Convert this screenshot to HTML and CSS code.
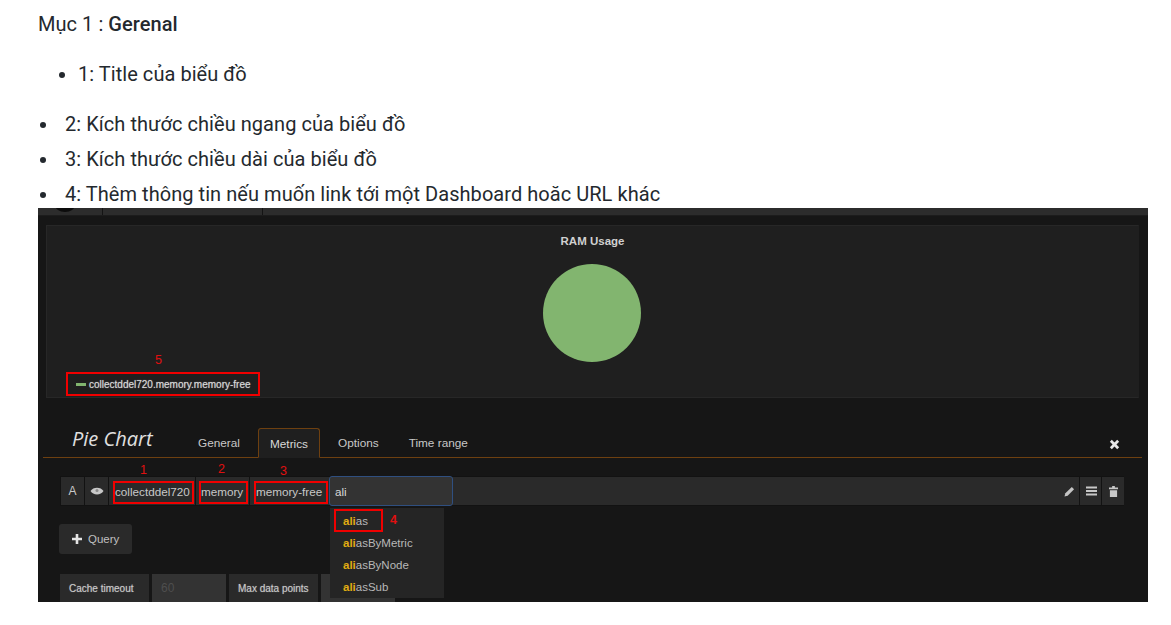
FILE: index.html
```html
<!DOCTYPE html>
<html lang="en">
<head>
    <meta charset="UTF-8">
    <meta name="viewport" content="width=device-width, initial-scale=1.0">
    <title>Mục 1 : Gerenal</title>
    <link rel="stylesheet" href="styles.css">
</head>
<body>
    <p class="intro">Mục 1 : <strong>Gerenal</strong></p>
    <ul class="list-nested">
        <li>1: Title của biểu đồ</li>
    </ul>
    <ul class="list-flat">
        <li>2: Kích thước chiều ngang của biểu đồ</li>
        <li>3: Kích thước chiều dài của biểu đồ</li>
        <li>4: Thêm thông tin nếu muốn link tới một Dashboard hoăc URL khác</li>
    </ul>

    <div class="shot">
        <div class="topbar">
            <span class="topbar-logo"></span>
            <span class="topbar-wide"></span>
        </div>

        <div class="panel">
            <div class="panel-title">RAM Usage</div>
            <div class="pie"></div>
            <div class="legend">
                <span class="note note-5">5</span>
                <span class="legend-box"><span class="legend-line"></span>collectddel720.memory.memory-free</span>
            </div>
        </div>

        <div class="editor-head">
            <div class="editor-title">Pie Chart</div>
            <div class="tab">General</div>
            <div class="tab tab-active">Metrics</div>
            <div class="tab">Options</div>
            <div class="tab">Time range</div>
            <svg class="close" viewBox="0 0 12 12"><path d="M2 2l8 8M10 2l-8 8" stroke="#e8e8e8" stroke-width="3"/></svg>
        </div>

        <div class="query-row">
            <div class="cell cell-a">A</div>
            <div class="cell cell-eye">
                <svg viewBox="0 0 14 10" width="14" height="10"><path d="M0.5 5C3 0.5 11 0.5 13.500 5C11 9.500 3 9.500 0.500 5Z" fill="#c8c8c8"/><circle cx="7" cy="4.500" r="1.500" fill="#8a8a8a"/></svg>
            </div>
            <div class="cell cell-seg seg-1"><span class="note note-1">1</span><span class="mark">collectddel720</span></div>
            <div class="cell cell-seg seg-2"><span class="note note-2">2</span><span class="mark">memory</span></div>
            <div class="cell cell-seg seg-3"><span class="note note-3">3</span><span class="mark">memory-free</span></div>
            <div class="query-input">
                ali
                <div class="dropdown">
                    <div class="drop-item drop-first"><b>ali</b>as<span class="note note-4">4</span></div>
                    <div class="drop-item"><b>ali</b>asByMetric</div>
                    <div class="drop-item"><b>ali</b>asByNode</div>
                    <div class="drop-item"><b>ali</b>asSub</div>
                </div>
            </div>
            <div class="query-fill">
                <svg viewBox="0 0 12 12" width="11" height="11"><path d="M0.500 11.500L1.500 8L8.500 1L11 3.500L4 10.500Z" fill="#c4c4c4"/></svg>
            </div>
            <div class="cell cell-icon icon-bars">
                <svg viewBox="0 0 11 10" width="11" height="10"><path d="M0 0.500h11v2H0zM0 4h11v2H0zM0 7.500h11v2H0z" fill="#c8c8c8"/></svg>
            </div>
            <div class="cell cell-icon">
                <svg viewBox="0 0 10 12" width="9" height="11"><path d="M3.500 0h3v1.500H10v2H0v-2h3.500zM1 4.500h8V12H1z" fill="#c8c8c8"/></svg>
            </div>
        </div>

        <div class="query-btn">
            <svg viewBox="0 0 10 10" width="10" height="10"><path d="M5 0v10M0 5h10" stroke="#e4e4e4" stroke-width="2.600"/></svg>
            Query
        </div>

        <div class="options-row">
            <div class="opt-label">Cache timeout</div>
            <div class="opt-input">60</div>
            <div class="opt-label">Max data points</div>
            <div class="opt-input"></div>
        </div>
    </div>
</body>
</html>
```

FILE: styles.css
```css
body {
    margin: 0;
    padding: 0 23px 0 38px;
    background-color: #fff;
    color: #24292e;
    font-family: 'Roboto', 'Noto Sans', sans-serif;
    font-size: 20px;
    letter-spacing: 0.05px;
    overflow: hidden;
}
.intro {
    margin: 0;
    padding-top: 11px;
    line-height: 27px;
}
strong {
    font-weight: 500;
}
ul {
    margin: 0;
    list-style: disc;
}
.list-nested {
    padding-left: 40px;
    margin-top: 23px;
    line-height: 27px;
}
.list-flat {
    padding-left: 21px;
    margin-top: 23px;
}
.list-flat li {
    height: 35px;
    padding-left: 6px;
    line-height: 27px;
}
.list-flat li:last-child {
    height: 27px;
}

/* screenshot of the grafana editor */
.shot {
    position: relative;
    width: 1110px;
    height: 394px;
    overflow: hidden;
    background-color: #161616;
    color: #c8c8c8;
    font-family: 'Liberation Sans', Arial, sans-serif;
    font-size: 11px;
    letter-spacing: 0;
}
.topbar {
    display: flex;
    height: 7px;
    background-color: #2c2c2c;
    border-bottom: 1px solid #1c1c1c;
}
.topbar-logo {
    width: 64px;
    border-right: 1px solid #141414;
    position: relative;
}
.topbar-logo::before {
    content: "";
    position: absolute;
    left: 17px;
    top: -10px;
    width: 20px;
    height: 14px;
    border-radius: 50%;
    background-color: #0c0c0c;
}
.topbar-wide {
    width: 159px;
    border-right: 1px solid #141414;
}
.panel {
    margin: 9px 9px 0 8px;
    height: 171px;
    background-color: #1f1f1f;
    border: 1px solid #272727;
    border-right-color: #1f1f1f;
    display: flex;
    flex-direction: column;
    align-items: center;
}
.panel-title {
    margin-top: 9px;
    font-size: 11.500px;
    font-weight: bold;
    line-height: 13px;
    color: #d0d0d0;
}
.pie {
    width: 98px;
    height: 98px;
    margin: 16px 2px 0 0;
    border-radius: 50%;
    background-color: #82b56f;
}
.legend {
    align-self: flex-start;
    margin: 10px 0 0 19px;
    position: relative;
}
.legend-box {
    display: flex;
    align-items: center;
    gap: 3px;
    box-sizing: border-box;
    width: 194px;
    height: 24px;
    padding-left: 8px;
    border: 2px solid #f00000;
    font-size: 10px;
    color: #d8d8d8;
    text-shadow: 0 0 1px #9a9a9a;
    white-space: nowrap;
}
.legend-line {
    width: 10px;
    height: 3px;
    background-color: #82b56f;
}
.note {
    position: absolute;
    color: #e01010;
    font-size: 12.500px;
    line-height: 12px;
    text-shadow: none;
}
.note-5 { left: 89px; top: -18px; }
.note-1 { left: 31px; top: -13px; }
.note-2 { left: 22px; top: -14px; }
.note-3 { left: 30px; top: -12px; }
.note-4 { left: 60px; top: 4px; font-weight: bold; }

.editor-head {
    display: flex;
    align-items: flex-end;
    height: 59px;
    margin: 0 6px 0 5px;
    border-bottom: 1px solid #6e4010;
    position: relative;
}
.editor-title {
    width: 143px;
    padding-left: 29px;
    box-sizing: border-box;
    font-family: 'Open Sans', sans-serif;
    font-size: 20px;
    font-style: italic;
    line-height: 36px;
    color: #e0e0e0;
}
.tab {
    padding: 0 12px;
    margin-right: 6px;
    height: 30px;
    line-height: 33px;
    font-size: 11.800px;
    color: #c8c8c8;
    box-sizing: border-box;
}
.tab-active {
    position: relative;
    top: 1px;
    line-height: 30px;
    background-color: #1f1f1f;
    border: 1px solid #6e4010;
    border-bottom-color: #1f1f1f;
    border-radius: 3px 3px 0 0;
    padding: 0 11px;
    color: #d8d8d8;
}
.close {
    width: 11px;
    height: 11px;
    position: absolute;
    right: 22px;
    top: 41px;
}

.query-row {
    display: flex;
    height: 30px;
    margin: 18px 24px 0 22px;
    background-color: #2a2a2a;
    border: 1px solid #121212;
    border-width: 1px 0;
    box-sizing: border-box;
    font-size: 11.700px;
    line-height: 28px;
    color: #c8c8c8;
}
.cell {
    position: relative;
    background-color: #2a2a2a;
    border-right: 1px solid #121212;
    display: flex;
    align-items: center;
    justify-content: center;
    box-sizing: border-box;
}
.cell-a { width: 25px; border-left: 1px solid #121212; font-size: 12px; }
.cell-eye { width: 24px; }
.seg-1 { width: 87px; }
.seg-2 { width: 54px; }
.seg-3 { width: 79px; border-right: none; }
.mark {
    display: block;
    box-sizing: border-box;
    height: 23px;
    margin-top: 2px;
    line-height: 18px;
    border: 2px solid #f00000;
    padding: 0;
    white-space: nowrap;
}
.seg-1 .mark { width: 81px; margin-left: 3px; }
.seg-2 .mark { width: 49px; margin-left: 2px; }
.seg-3 .mark { width: 74px; margin-left: 3px; }
.query-input {
    position: relative;
    box-sizing: border-box;
    width: 124px;
    margin-top: -1px;
    height: 30px;
    padding-left: 5px;
    line-height: 30px;
    background-color: #333;
    border: 1px solid #2f4f80;
    border-radius: 3px;
    color: #d8d8d8;
}
.query-fill {
    flex: 1;
    display: flex;
    align-items: center;
    justify-content: flex-end;
    padding-right: 4px;
    border-right: 1px solid #121212;
}
.cell-icon { width: 22px; }
.cell-icon:last-child { border-right: none; }
.icon-bars { padding-left: 2px; }
.dropdown {
    position: absolute;
    left: 0;
    top: 31px;
    width: 114px;
    height: 90px;
    padding-top: 2px;
    box-sizing: border-box;
    background-color: #252525;
    font-size: 11.500px;
    color: #b8b8b8;
    z-index: 2;
}
.drop-item {
    position: relative;
    height: 22px;
    line-height: 22px;
    padding-left: 13px;
}
.drop-item b {
    color: #e0ac12;
}
.drop-first::before {
    content: "";
    position: absolute;
    left: 4px;
    top: -1px;
    width: 49px;
    height: 23px;
    box-sizing: border-box;
    border: 2px solid #f00000;
}
.query-btn {
    display: flex;
    align-items: center;
    gap: 6px;
    box-sizing: border-box;
    width: 73px;
    height: 30px;
    margin: 18px 0 0 21px;
    padding-left: 13px;
    background-color: #2a2a2a;
    border-radius: 3px;
    font-size: 11.500px;
    color: #c0c0c0;
}
.options-row {
    display: flex;
    gap: 3px;
    margin: 20px 0 0 22px;
    height: 30px;
    font-size: 10px;
    line-height: 29px;
}
.opt-label {
    width: 89px;
    box-sizing: border-box;
    padding-left: 9px;
    background-color: #2a2a2a;
    color: #c8c8c8;
    text-shadow: 0 0 1px #8a8a8a;
}
.opt-input {
    width: 74px;
    box-sizing: border-box;
    padding-left: 9px;
    background-color: #333;
    color: #4e4e4e;
    font-size: 12px;
}
```
